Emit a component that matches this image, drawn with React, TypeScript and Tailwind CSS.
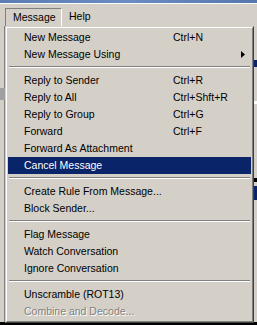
import React from 'react'

type Item =
  | { kind: 'item'; label: string; shortcut?: string; sub?: boolean; active?: boolean; disabled?: boolean }
  | { kind: 'sep' }

const items: Item[] = [
  { kind: 'item', label: 'New Message', shortcut: 'Ctrl+N' },
  { kind: 'item', label: 'New Message Using', sub: true },
  { kind: 'sep' },
  { kind: 'item', label: 'Reply to Sender', shortcut: 'Ctrl+R' },
  { kind: 'item', label: 'Reply to All', shortcut: 'Ctrl+Shft+R' },
  { kind: 'item', label: 'Reply to Group', shortcut: 'Ctrl+G' },
  { kind: 'item', label: 'Forward', shortcut: 'Ctrl+F' },
  { kind: 'item', label: 'Forward As Attachment' },
  { kind: 'item', label: 'Cancel Message', active: true },
  { kind: 'sep' },
  { kind: 'item', label: 'Create Rule From Message...' },
  { kind: 'item', label: 'Block Sender...' },
  { kind: 'sep' },
  { kind: 'item', label: 'Flag Message' },
  { kind: 'item', label: 'Watch Conversation' },
  { kind: 'item', label: 'Ignore Conversation' },
  { kind: 'sep' },
  { kind: 'item', label: 'Unscramble (ROT13)' },
  { kind: 'item', label: 'Combine and Decode...', disabled: true },
]

// widths of the clipped bits of the message list row under the menu
const bits = [3, 2, 5, 2, 6, 3, 4, 2, 7, 3, 5, 2, 4, 6, 2, 5, 3, 4, 2, 6, 3, 5, 2, 4, 3, 6, 2, 5, 4, 3, 2, 5]

const MenuRow = ({ item }: { item: Item }) => {
  if (item.kind === 'sep') {
    return (
      <div className="h-[9px] pt-[3px] mx-[1px]">
        <div className="h-[2px] border-t border-t-[#808080] border-b border-b-white" />
      </div>
    )
  }
  let cls = 'text-black'
  if (item.active) cls = 'bg-[#0a246a] text-white'
  if (item.disabled) cls = 'text-[#808080] [text-shadow:1px_1px_0_#ffffff]'
  return (
    <div className={'h-[17px] flex items-center pl-[16px] ' + cls}>
      <span className="w-[149px] whitespace-nowrap">{item.label}</span>
      <span className="flex-1 whitespace-nowrap">{item.shortcut}</span>
      {item.sub && (
        <svg width="4" height="7" viewBox="0 0 4 7" className="mr-[6px]">
          <path d="M0 0 L4 3.5 L0 7 Z" fill="#000" />
        </svg>
      )}
    </div>
  )
}

export default function App() {
  return (
    <div
      className="relative w-[257px] h-[325px] overflow-hidden bg-[#d4d0c8] text-[10.5px] leading-none"
      style={{ fontFamily: '"Liberation Sans", Arial, sans-serif' }}
    >
      {/* title bar remains */}
      <div className="h-[3px] bg-gradient-to-r from-[#5b7db4] via-[#6a8cc2] to-[#5577ae]" />

      {/* menu bar */}
      <div className="h-[23px] flex items-end pl-[5px] border-t border-t-white">
        <div className="w-[57px] h-[18px] border-t border-l border-t-[#808080] border-l-[#808080] border-r border-r-white flex items-center pl-[7px] pb-[1px]">
          Message
        </div>
        <div className="h-[18px] flex items-center pl-[7px] pb-[1px]">Help</div>
      </div>

      {/* window behind the menu */}
      <div className="flex h-[296px]">
        <div className="w-[5px] flex flex-col">
          <div className="h-[62px] border-r border-r-[#808080]" />
          <div className="h-[12px] bg-[#a0a0a0]" />
          <div className="flex-1 border-r border-r-[#808080]" />
        </div>
        <div className="flex-1" />
        <div className="w-[3px] flex flex-col">
          <div className="h-[34px]" />
          <div className="h-[7px] bg-[#0a246a]" />
          <div className="h-[34px]" />
          <div className="h-[3px] bg-white" />
          <div className="h-[74px]" />
          <div className="h-[4px] bg-black" />
          <div className="h-[4px]" />
          <div className="h-[14px] bg-[#0a246a]" />
          <div className="flex-1" />
        </div>
      </div>
      <div className="h-[3px] bg-black" />
      <div className="h-[3px] bg-white flex gap-[2px] pl-[5px]">
        {bits.map((w, i) => (
          <div key={i} className="h-[2px] bg-black" style={{ width: w }} />
        ))}
      </div>

      {/* dropdown */}
      <div className="absolute left-[5px] top-[26px] w-[249px] border-t border-l border-t-[#d4d0c8] border-l-[#d4d0c8] border-r border-b border-r-[#404040] border-b-[#404040] bg-[#d4d0c8]">
        <div className="border-t border-l border-t-white border-l-white border-r border-b border-r-[#808080] border-b-[#808080] p-[1px]">
          {items.map((it, i) => (
            <MenuRow key={i} item={it} />
          ))}
        </div>
      </div>
    </div>
  )
}
